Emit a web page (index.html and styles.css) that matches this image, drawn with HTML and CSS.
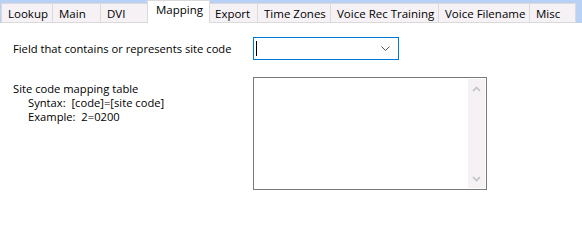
FILE: index.html
```html
<!DOCTYPE html>
<html>
<head>
<meta charset="utf-8">
<link rel="stylesheet" href="styles.css">
</head>
<body>
<div class="tabbar">
  <div class="tabs">
    <div class="tab w-lookup">Lookup</div>
    <div class="tab w-main">Main</div>
    <div class="tab w-dvi">DVI</div>
    <div class="tab tab-active w-mapping">Mapping</div>
    <div class="tab w-export">Export</div>
    <div class="tab w-tz">Time Zones</div>
    <div class="tab w-vrt">Voice Rec Training</div>
    <div class="tab w-vf">Voice Filename</div>
    <div class="tab w-misc">Misc</div>
  </div>
</div>
<div class="panel">
  <div class="row row-field">
    <div class="label">Field that contains or represents site code</div>
    <div class="combo">
      <span class="caret"></span>
      <svg class="chev" width="9" height="5" viewBox="0 0 9 5"><path d="M0.5 0.5 L4.5 4.5 L8.5 0.5" fill="none" stroke="#555" stroke-width="1"/></svg>
    </div>
  </div>
  <div class="row row-table">
    <div class="label label-block">
      <div>Site code mapping table</div>
      <div class="sub">Syntax:&nbsp; [code]=[site code]</div>
      <div class="sub">Example:&nbsp; 2=0200</div>
    </div>
    <div class="textbox">
      <div class="textarea-body"></div>
      <div class="scrollbar">
        <svg width="9" height="6" viewBox="0 0 9 6"><path d="M1 5 L4.5 1.5 L8 5" fill="none" stroke="#c2c2c2" stroke-width="1.6"/></svg>
        <svg width="9" height="6" viewBox="0 0 9 6"><path d="M1 1 L4.5 4.5 L8 1" fill="none" stroke="#c2c2c2" stroke-width="1.6"/></svg>
      </div>
    </div>
  </div>
</div>
</body>
</html>
```
FILE: styles.css
```css
html, body {
  margin: 0;
  padding: 0;
  background: #ffffff;
  width: 582px;
  height: 203px;
  overflow: hidden;
}
body {
  font-family: "Open Sans", "Noto Sans", sans-serif;
  font-size: 11.2px;
  color: #000;
}
.tabbar {
  background: #b9d1f4;
  height: 23px;
  display: flex;
  align-items: flex-end;
  padding-left: 1px;
  box-sizing: border-box;
}
.tabs {
  display: flex;
  align-items: flex-end;
  height: 23px;
  background: #b9d1f4;
}
.tab {
  box-sizing: border-box;
  height: 20px;
  line-height: 19px;
  padding-left: 6px;
  background: #f5f1f5;
  border-left: 1px solid #dadada;
  border-top: 1px solid #dadada;
  border-bottom: 1px solid #dadada;
  white-space: nowrap;
  font-size: 11.5px;
}
.tab:last-child {
  border-right: 1px solid #dadada;
}
.tab-active {
  background: #ffffff;
  height: 23px;
  line-height: 18px;
  border: 1px solid #dadada;
  border-bottom: none;
  margin-left: -2px;
  margin-right: -2px;
  padding-left: 8px;
  position: relative;
  z-index: 1;
}
.tab-active + .tab {
  border-left: none;
  padding-left: 7px;
}
.w-lookup { width: 51px; }
.w-main { width: 48px; }
.w-dvi { width: 49px; }
.w-mapping { width: 63px; }
.w-export { width: 49px; }
.w-tz { width: 73px; }
.w-vrt { width: 108px; }
.w-vf { width: 91px; }
.w-misc { width: 47px; }

.panel {
  padding-left: 13px;
  padding-top: 14px;
}
.row {
  display: flex;
}
.row-field {
  align-items: center;
  height: 23px;
}
.label {
  width: 240px;
  flex: none;
}
.combo {
  box-sizing: border-box;
  width: 146px;
  height: 23px;
  border: 1px solid #0078d7;
  display: flex;
  align-items: center;
  justify-content: space-between;
  padding: 0 8px 0 2px;
}
.caret {
  display: block;
  width: 1px;
  height: 15px;
  background: #000;
}
.chev {
  display: block;
}
.row-table {
  margin-top: 17px;
}
.label-block {
  padding-top: 5px;
  line-height: 14px;
}
.sub {
  padding-left: 15px;
}
.textbox {
  box-sizing: border-box;
  width: 234px;
  height: 113px;
  border: 1px solid #7a7a7a;
  display: flex;
  padding: 1px;
}
.textarea-body {
  flex: 1;
}
.scrollbar {
  width: 17px;
  background: #f5f1f5;
  display: flex;
  flex-direction: column;
  justify-content: space-between;
  align-items: center;
  padding: 7px 0 6px;
  box-sizing: border-box;
}
.scrollbar svg {
  display: block;
}
```
